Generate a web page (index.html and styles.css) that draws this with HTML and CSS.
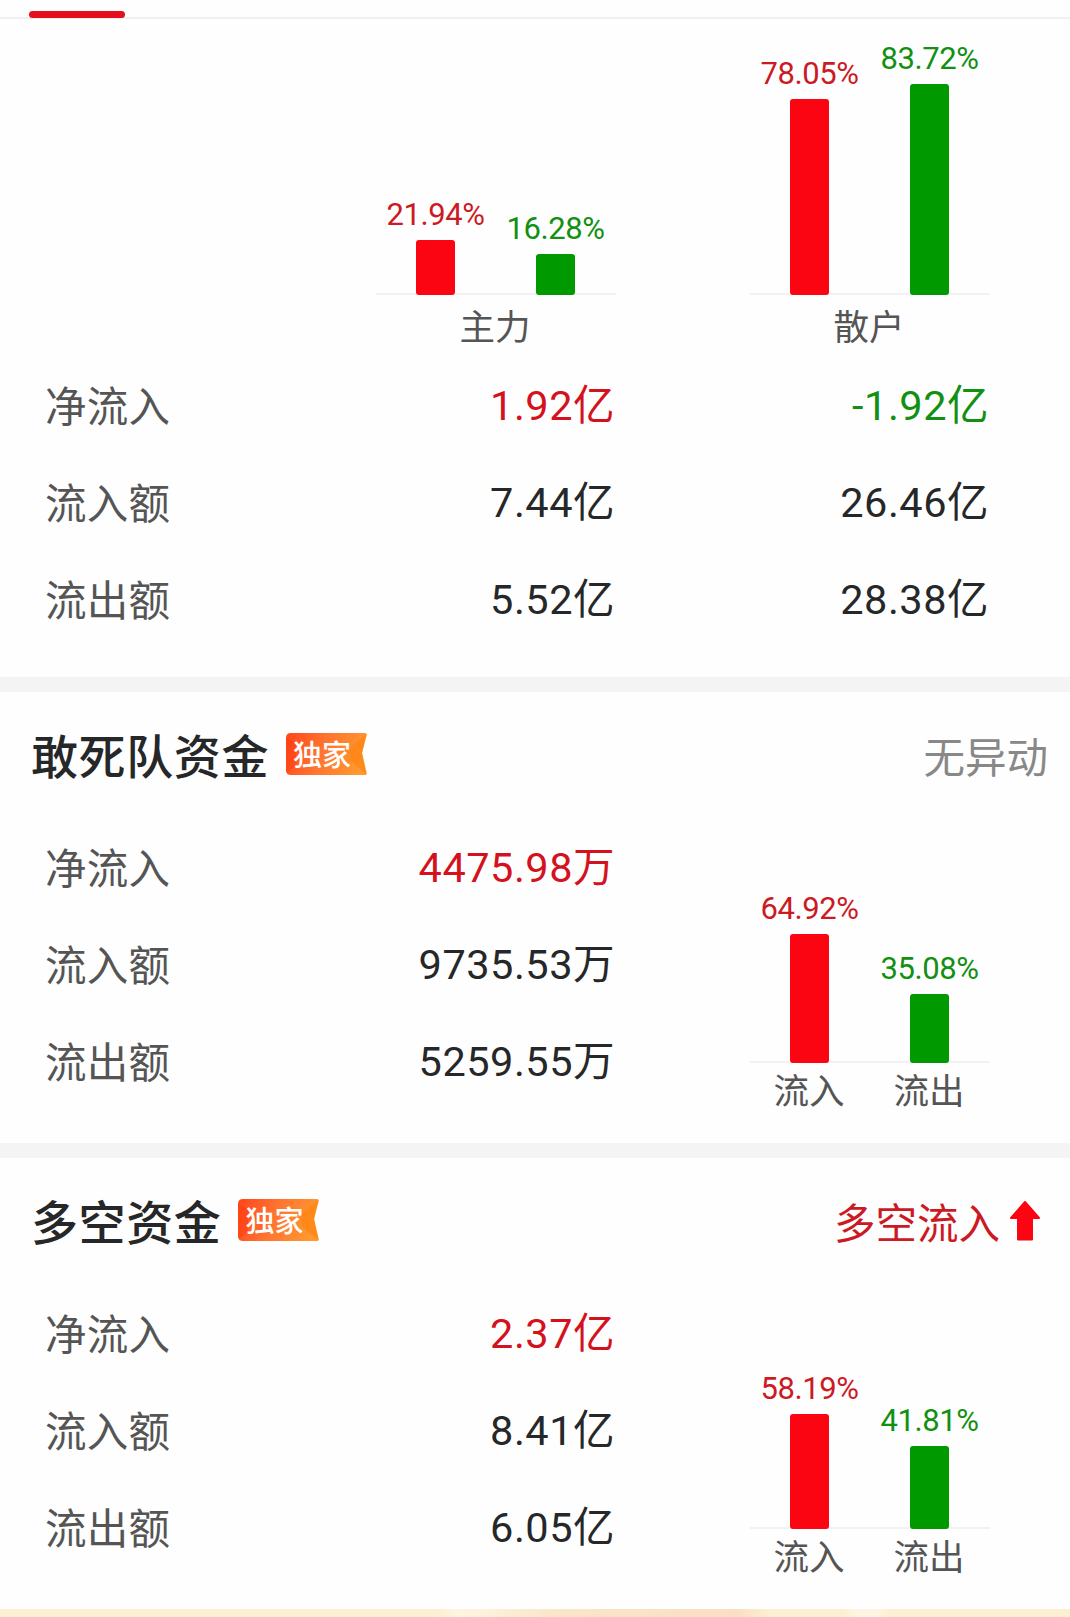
FILE: index.html
```html
<!DOCTYPE html>
<html lang="zh-CN">
<head>
    <meta charset="UTF-8">
    <title>资金流向</title>
    <link rel="stylesheet" href="styles.css">
</head>
<body>
    <div class="tab-bar"><span class="tab-line"></span></div>

    <!-- 主力 / 散户 -->
    <section class="overview">
        <div class="overview-charts">
            <div class="chart">
                <div class="plot">
                    <div class="bar-col red"><span class="percent">21.94%</span><div class="bar" style="height: 55px"></div></div>
                    <div class="bar-col green"><span class="percent">16.28%</span><div class="bar" style="height: 41px"></div></div>
                </div>
                <div class="axis-labels"><span>主力</span></div>
            </div>
            <div class="chart">
                <div class="plot">
                    <div class="bar-col red"><span class="percent">78.05%</span><div class="bar" style="height: 196px"></div></div>
                    <div class="bar-col green"><span class="percent">83.72%</span><div class="bar" style="height: 211px"></div></div>
                </div>
                <div class="axis-labels"><span>散户</span></div>
            </div>
        </div>
        <div class="row"><span class="label">净流入</span><span class="value up">1.92亿</span><span class="value down">-1.92亿</span></div>
        <div class="row"><span class="label">流入额</span><span class="value">7.44亿</span><span class="value">26.46亿</span></div>
        <div class="row"><span class="label">流出额</span><span class="value">5.52亿</span><span class="value">28.38亿</span></div>
    </section>

    <section class="fund">
        <div class="fund-head">
            <h2>敢死队资金</h2>
            <div class="badge">
                <svg class="badge-bg" viewBox="0 0 81 42">
                    <defs>
                        <linearGradient id="flag" x1="0" y1="0.3" x2="1" y2="0.5">
                            <stop offset="0" stop-color="#ff4a1c"/>
                            <stop offset="0.45" stop-color="#ff7430"/>
                            <stop offset="1" stop-color="#ff9a30"/>
                        </linearGradient>
                    </defs>
                    <path d="M5 0H79Q81.500 0 80.500 3L76 20L80.500 39Q81.500 42 79 42H5Q0 42 0 37V5Q0 0 5 0Z" fill="url(#flag)"/>
                    <path d="M0 5L10 10V32L1 40Q0 39 0 37Z" fill="#ff3c10" opacity="0.5"/>
                    <path d="M80 1L64 15V27L80 41L76 20Z" fill="#ff8614" opacity="0.8"/>
                </svg>
                <span class="badge-text">独家</span>
            </div>
            <span class="status">无异动</span>
        </div>
        <div class="fund-body">
            <div class="rows">
                <div class="row"><span class="label">净流入</span><span class="value up">4475.98万</span></div>
                <div class="row"><span class="label">流入额</span><span class="value">9735.53万</span></div>
                <div class="row"><span class="label">流出额</span><span class="value">5259.55万</span></div>
            </div>
            <div class="chart">
                <div class="plot">
                    <div class="bar-col red"><span class="percent">64.92%</span><div class="bar" style="height: 129px"></div></div>
                    <div class="bar-col green"><span class="percent">35.08%</span><div class="bar" style="height: 69px"></div></div>
                </div>
                <div class="axis-labels"><span>流入</span><span>流出</span></div>
            </div>
        </div>
    </section>

    <section class="fund">
        <div class="fund-head">
            <h2>多空资金</h2>
            <div class="badge">
                <svg class="badge-bg" viewBox="0 0 81 42">
                    <path d="M5 0H79Q81.500 0 80.500 3L76 20L80.500 39Q81.500 42 79 42H5Q0 42 0 37V5Q0 0 5 0Z" fill="url(#flag)"/>
                    <path d="M0 5L10 10V32L1 40Q0 39 0 37Z" fill="#ff3c10" opacity="0.5"/>
                    <path d="M80 1L64 15V27L80 41L76 20Z" fill="#ff8614" opacity="0.8"/>
                </svg>
                <span class="badge-text">独家</span>
            </div>
            <span class="status up with-arrow">多空流入
                <svg class="arrow" viewBox="0 0 30 40">
                    <path d="M15 1L29 17H22V38.500H8V17H1Z" fill="#fa0511" stroke="#fa0511" stroke-width="2" stroke-linejoin="round"/>
                </svg>
            </span>
        </div>
        <div class="fund-body">
            <div class="rows">
                <div class="row"><span class="label">净流入</span><span class="value up">2.37亿</span></div>
                <div class="row"><span class="label">流入额</span><span class="value">8.41亿</span></div>
                <div class="row"><span class="label">流出额</span><span class="value">6.05亿</span></div>
            </div>
            <div class="chart">
                <div class="plot">
                    <div class="bar-col red"><span class="percent">58.19%</span><div class="bar" style="height: 115px"></div></div>
                    <div class="bar-col green"><span class="percent">41.81%</span><div class="bar" style="height: 83px"></div></div>
                </div>
                <div class="axis-labels"><span>流入</span><span>流出</span></div>
            </div>
        </div>
    </section>

    <div class="banner"></div>
</body>
</html>
```

FILE: styles.css
```css
* {
    box-sizing: border-box;
}

body {
    margin: 0;
    width: 1070px;
    height: 1617px;
    overflow: hidden;
    background: #fefefe;
    color: #262728;
    font-family: Roboto, "Noto Sans CJK SC", sans-serif;
}

.tab-bar {
    height: 19px;
    padding: 11px 0 0 29px;
    border-bottom: 2px solid #f0f0f0;
}

.tab-line {
    display: block;
    position: relative;
    width: 96px;
    height: 7px;
    border-radius: 4px;
    background: #e60f1c;
}

/* rows */
.row {
    display: grid;
    grid-template-columns: 331px 239px 374px;
    align-items: center;
    height: 97px;
    padding-left: 45px;
    font-size: 41.500px;
    line-height: 60px;
    letter-spacing: 0.2px;
}

.label {
    padding-top: 2px;
    color: #555;
}

.value {
    padding-bottom: 2px;
    letter-spacing: 0.500px;
    text-align: right;
}

.up {
    color: #d4121e;
}

.down {
    color: #119011;
}

/* charts */
.chart {
    width: 240px;
}

.plot {
    display: flex;
    height: 244px;
    background: linear-gradient(#f2f2f2, #f2f2f2) left bottom / 100% 2px no-repeat;
}

.bar-col {
    flex: 1;
    display: flex;
    flex-direction: column;
    justify-content: flex-end;
    align-items: center;
    padding-right: 1px;
}

.percent {
    margin-bottom: 7px;
    font-size: 31px;
    line-height: 36px;
    letter-spacing: -0.4px;
}

.bar {
    width: 39px;
    border-radius: 3px;
}

.red .percent {
    color: #cc1a24;
}

.red .bar {
    background: #fa0511;
}

.green .percent {
    color: #119011;
}

.green .bar {
    background: #009900;
}

.axis-labels {
    display: flex;
    height: 54px;
    align-items: center;
    padding-top: 3px;
    font-size: 35.500px;
    line-height: 50px;
    color: #555;
}

.axis-labels span {
    flex: 1;
    padding-right: 2px;
    text-align: center;
}

.overview {
    height: 658px;
}

.overview-charts {
    display: flex;
    gap: 134px;
    padding-left: 376px;
}

.overview .plot {
    height: 276px;
}

.overview .axis-labels {
    height: 63px;
}

/* fund sections */
.fund {
    height: 466px;
    border-top: 15px solid #f4f4f4;
}

.fund-head {
    display: flex;
    align-items: center;
    height: 127px;
    padding: 0 22px 0 31px;
}

.fund-head h2 {
    margin: 0;
    padding-top: 5px;
    font-size: 47px;
    font-weight: 500;
    line-height: 68px;
    letter-spacing: 0.6px;
}

.badge {
    position: relative;
    width: 81px;
    height: 42px;
    margin: 0 0 3px 17px;
}

.badge-bg {
    display: block;
    width: 81px;
    height: 42px;
}

.badge-text {
    position: absolute;
    left: 7px;
    top: 2px;
    font-size: 29px;
    font-weight: 500;
    line-height: 42px;
    color: #fff;
}

.status {
    margin-left: auto;
    padding-top: 6px;
    font-size: 41.500px;
    line-height: 60px;
    color: #888;
}

.status.up {
    color: #cc1a24;
}

.with-arrow {
    display: flex;
    align-items: center;
    gap: 10px;
    padding-right: 8px;
}

.arrow {
    width: 30px;
    height: 40px;
    margin-bottom: 8px;
}

.fund-body {
    display: flex;
}

.fund-body .rows {
    width: 750px;
}

.fund-body .row {
    grid-template-columns: 331px 239px;
}

.fund-body .label {
    padding-top: 4px;
}

.fund-body .value {
    padding-bottom: 0;
}

.banner {
    height: 8px;
    background: linear-gradient(90deg, #fdf0d2 0 41%, #fdf5e2 43%, #fae6c8 52%, #fadfc4 69%, #fdf0d2 72% 79%, #fdf5e2 80% 82%, #fdf0d2 83%);
}
```
